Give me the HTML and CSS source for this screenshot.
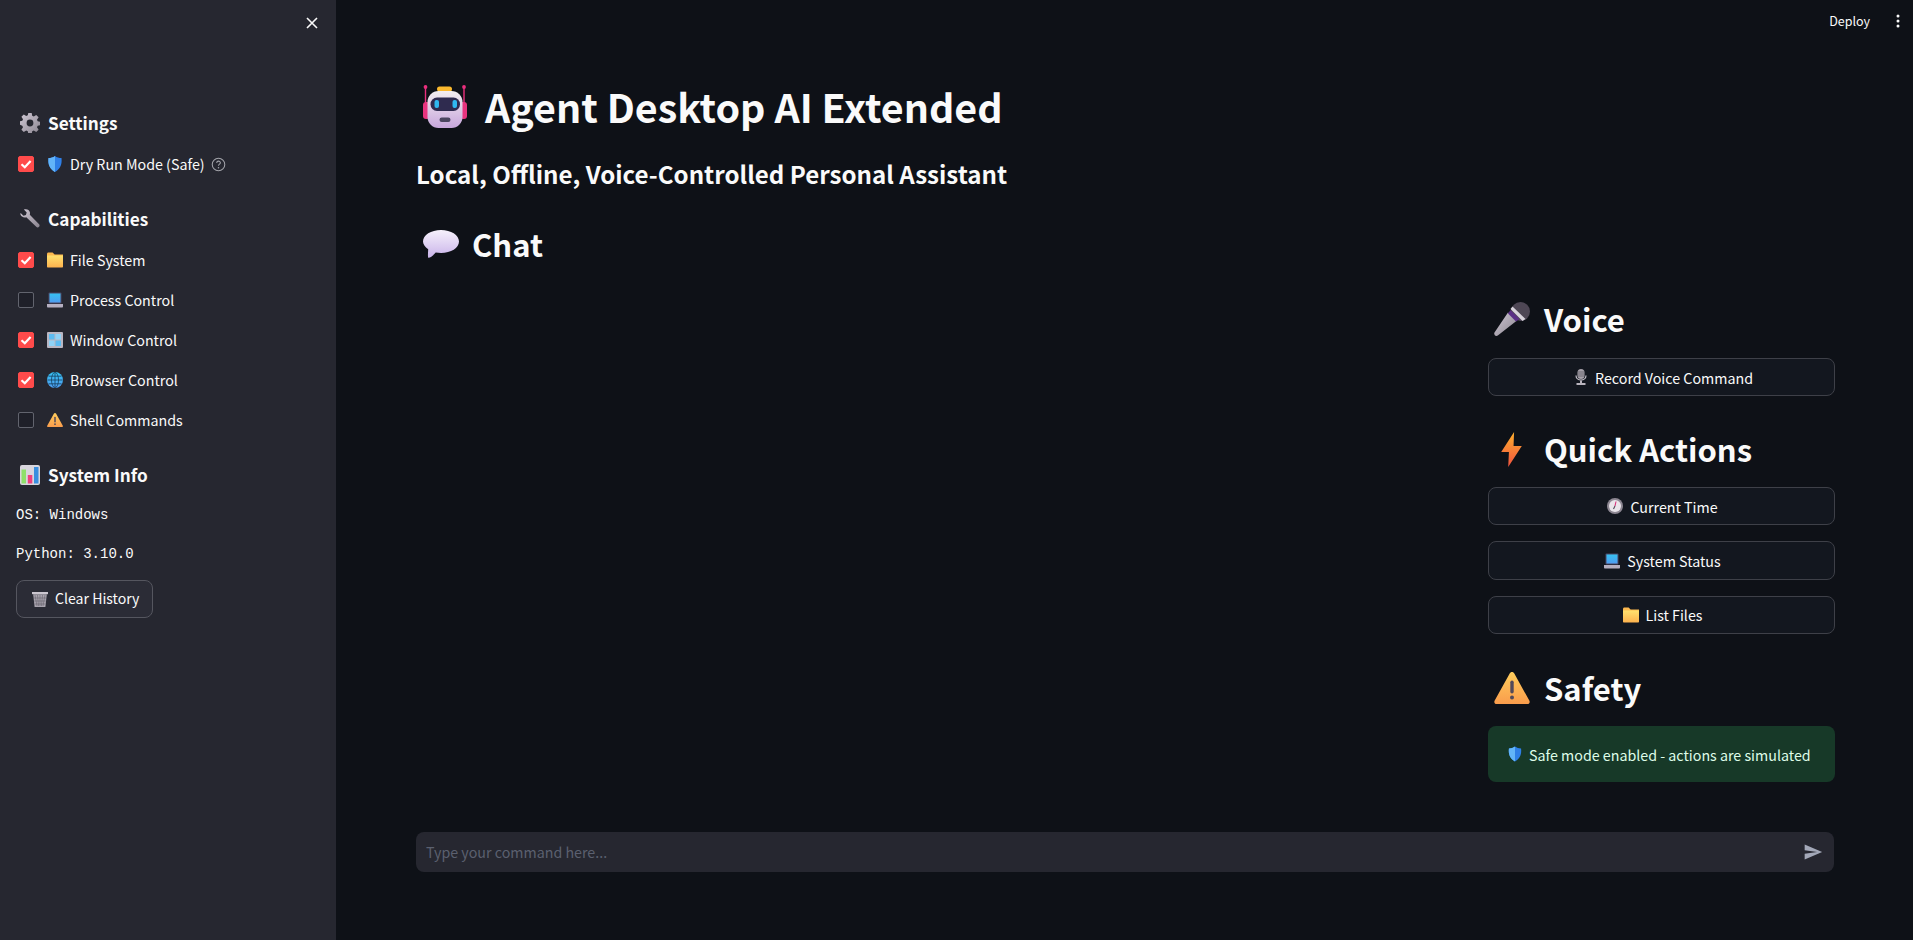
FILE: index.html
```html
<!DOCTYPE html>
<html lang="en">
<head>
<meta charset="utf-8">
<title>Agent Desktop AI Extended</title>
<link rel="stylesheet" href="styles.css">
</head>
<body>
<svg class="defs" aria-hidden="true">
  <defs>
    <linearGradient id="gBlue" x1="0" y1="0" x2="0" y2="1"><stop offset="0" stop-color="#35c1f1"/><stop offset="1" stop-color="#4f9cf0"/></linearGradient>
    <linearGradient id="gFolder" x1="0" y1="0" x2="0" y2="1"><stop offset="0" stop-color="#ffe16e"/><stop offset="1" stop-color="#fdb24e"/></linearGradient>
    <linearGradient id="gWarn" x1="0" y1="0" x2="0" y2="1"><stop offset="0" stop-color="#ffcd5c"/><stop offset="1" stop-color="#f99c4c"/></linearGradient>
    <linearGradient id="gBolt" x1="0" y1="0" x2="0" y2="1"><stop offset="0" stop-color="#ffb02e"/><stop offset="1" stop-color="#f0523f"/></linearGradient>
    <linearGradient id="gHead" x1="0" y1="0" x2="0" y2="1"><stop offset="0" stop-color="#f3eef0"/><stop offset="1" stop-color="#c7a6dc"/></linearGradient>
    <linearGradient id="gBubble" x1="0" y1="0" x2="0" y2="1"><stop offset="0" stop-color="#f6f1fb"/><stop offset="1" stop-color="#c9b3ea"/></linearGradient>
    <linearGradient id="gMetal" x1="0" y1="0" x2="1" y2="1"><stop offset="0" stop-color="#cfc8d4"/><stop offset="1" stop-color="#8b8590"/></linearGradient>

    <symbol id="i-gear" viewBox="0 0 20 20">
      <path fill="url(#gMetal)" fill-rule="evenodd" d="M8.3 0h3.4l.5 2.8 1.6.7 2.4-1.6 2.4 2.4-1.6 2.4.7 1.6 2.8.5v3.4l-2.8.5-.7 1.6 1.6 2.4-2.4 2.4-2.4-1.6-1.6.7-.5 2.8H8.3l-.5-2.8-1.6-.7-2.4 1.6-2.4-2.4 1.6-2.4-.7-1.6L0 11.7V8.3l2.3-.5.7-1.6-1.6-2.4 2.4-2.4 2.4 1.6 1.6-.7zM10 6.6a3.4 3.4 0 1 0 0 6.8 3.4 3.4 0 0 0 0-6.8z"/>
    </symbol>
    <symbol id="i-shield" viewBox="0 0 15 16">
      <path fill="#2f7fe6" d="M7.500 0C9.300 1.400 11.600 2 14 2.100c.7 5.800-.9 11-6.500 13.900C1.900 13.100.3 7.900 1 2.100 3.400 2 5.700 1.400 7.500 0z"/>
      <path fill="#62b4f8" d="M7.500 0v16C1.900 13.100.3 7.900 1 2.100 3.400 2 5.700 1.400 7.500 0z"/>
    </symbol>
    <symbol id="i-wrench" viewBox="0 0 20 20">
      <path fill="url(#gMetal)" d="M.6 3.900 3.500 6.700 5.900 5.900 6.700 3.500 3.900.6C6.600-.5 9.300.7 9.900 3.300c.2.900.1 1.700-.1 2.400l9.300 9.600c1.300 1.400-.3 3.800-2.100 2.900-.4-.2-.7-.5-1-.8L6.300 8.300c-1.400.4-3.100.2-4.300-.8C.6 6.500.1 5.300.6 3.900z"/>
    </symbol>
    <symbol id="i-folder" viewBox="0 0 16 15">
      <path fill="#fdb94f" d="M0 1.500C0 .7.600 0 1.400 0h4.200l2 2H16v3H0z"/>
      <path fill="url(#gFolder)" d="M0 3h16v11c0 .600-.400 1-1 1H1c-.600 0-1-.400-1-1z"/>
    </symbol>
    <symbol id="i-laptop" viewBox="0 0 16 15">
      <rect x="1.500" y="0" width="13" height="11" rx="1" fill="#4a4766"/>
      <rect x="2.500" y="1" width="11" height="9" fill="url(#gBlue)"/>
      <path fill="#b5afc0" d="M0 11.500h16V14c0 .500-.400 1-1 1H1c-.600 0-1-.500-1-1z"/>
    </symbol>
    <symbol id="i-window" viewBox="0 0 16 16">
      <rect width="16" height="16" rx="1" fill="#b9b6c2"/>
      <rect x="2" y="2" width="5.500" height="5.500" fill="#5cbcf2"/>
      <rect x="8.500" y="2" width="5.500" height="5.500" fill="#8fd3f7"/>
      <rect x="2" y="8.500" width="5.500" height="5.500" fill="#8fd3f7"/>
      <rect x="8.500" y="8.500" width="5.500" height="5.500" fill="#5cbcf2"/>
    </symbol>
    <symbol id="i-globe" viewBox="0 0 16 16">
      <circle cx="8" cy="8" r="8" fill="url(#gBlue)"/>
      <g fill="none" stroke="#16405f" stroke-width=".8">
        <ellipse cx="8" cy="8" rx="3.500" ry="7.600"/>
        <path d="M8 .4v15.200M.4 8h15.200M1.500 4.200h13M1.500 11.800h13"/>
      </g>
    </symbol>
    <symbol id="i-warn" viewBox="0 0 36 32">
      <path fill="url(#gWarn)" d="M15.700 1.600c1-2 3.600-2 4.600 0l15 27c1 1.700 0 3.400-2 3.400H2.700c-2 0-3-1.700-2-3.400z"/>
      <rect x="16.300" y="8.500" width="3.400" height="13" rx="1.700" fill="#524a5a"/>
      <circle cx="18" cy="25.500" r="2" fill="#524a5a"/>
    </symbol>
    <symbol id="i-chart" viewBox="0 0 20 20">
      <rect width="20" height="20" rx="2" fill="#d9d6de"/>
      <rect x="1.500" y="4.500" width="4.500" height="14" fill="#8fe06a"/>
      <rect x="7.800" y="10" width="4.500" height="8.500" fill="#f0407f"/>
      <rect x="14" y="2" width="4.500" height="16.500" fill="#3a8fe0"/>
    </symbol>
    <symbol id="i-trash" viewBox="0 0 16 16">
      <path fill="#cbc6cf" d="M0 1h16v2.200H0z"/>
      <path fill="#a9a4ae" d="M1.200 3.200h13.600L13.400 16H2.600z"/>
      <path fill="none" stroke="#66616d" stroke-width=".6" d="M3 4l2 11M5.500 4l1 11M8 4v11M10.500 4l-1 11M13 4l-2 11M2 7h12M2.300 10h11.400M2.600 13h10.800"/>
    </symbol>
    <symbol id="i-robot" viewBox="0 0 44 43">
      <rect x="14" y="1.500" width="15" height="5" rx="2.500" fill="#fbb92e"/>
      <path stroke="#ea2f7e" stroke-width="1.400" d="M2.500 2v20M41 2v20"/>
      <circle cx="2.500" cy="2" r="1.900" fill="#ea2f7e"/>
      <circle cx="41" cy="2" r="1.900" fill="#ea2f7e"/>
      <rect x="0" y="17" width="7" height="17" rx="3" fill="#e8347f"/>
      <rect x="37" y="17" width="7" height="17" rx="3" fill="#e8347f"/>
      <rect x="4.500" y="6" width="35" height="37" rx="11" fill="url(#gHead)"/>
      <rect x="7.500" y="12.500" width="29.500" height="13.500" rx="6.500" fill="#2f2b4f"/>
      <rect x="11.500" y="15" width="4.500" height="8" rx="2" fill="#2fb8f0"/>
      <rect x="29.500" y="15" width="4.500" height="8" rx="2" fill="#2fb8f0"/>
      <rect x="16.500" y="32.500" width="11" height="4.500" rx="2.200" fill="#4b4560"/>
    </symbol>
    <symbol id="i-bubble" viewBox="0 0 36 28">
      <path fill="url(#gBubble)" d="M18 0C28 0 36 5 36 11.500S28 23 18 23c-2 0-3.700-.2-5.300-.5C10.700 25 7.500 27.800 5.600 27.800c-1 0-.6-3.500-.4-8.600C2 17 0 14.400 0 11.500 0 5 8 0 18 0z"/>
    </symbol>
    <symbol id="i-mic" viewBox="0 0 36 34">
      <path fill="url(#gMetal)" d="M.5 30.500 14 10.500l9 8L3.800 33.500c-1 .8-2.300.6-3-.3-.6-.8-.8-1.900-.3-2.700z"/>
      <circle cx="26.500" cy="9.500" r="9.500" fill="#4e4755"/>
      <path fill="#5a2f86" d="m14 11.500 2.500-3.500 9 9-3.500 2.500z"/>
      <path fill="#d8d3dc" d="m16.500 7 2-2.500 13 12.500-3 2z"/>
    </symbol>
    <symbol id="i-bolt" viewBox="0 0 20 34">
      <path fill="url(#gBolt)" d="M12.500 0 0 19.500h7.500L6.800 34 20 13.500h-8z"/>
    </symbol>
    <symbol id="i-studio" viewBox="0 0 12 16">
      <rect x="2.500" y="0" width="7" height="10" rx="3.500" fill="#a6a1aa"/>
      <path fill="none" stroke="#c8c3cc" stroke-width="1.200" d="M1 6.500c0 6 10 6 10 0"/>
      <path fill="#b9b4bd" d="M5 11.500h2v2.500h3.500v2h-9v-2H5z"/>
      <path stroke="#55505c" stroke-width=".7" d="M3 3h6M3 5h6M3 7h6"/>
    </symbol>
    <symbol id="i-clock" viewBox="0 0 16 16">
      <circle cx="8" cy="8" r="8" fill="#8d8792"/>
      <circle cx="8" cy="8" r="6" fill="#e9e5ea"/>
      <path fill="none" stroke="#d8327a" stroke-width="1.100" d="M8 8 9 3.500"/>
      <path fill="none" stroke="#514b58" stroke-width="1.100" d="M8 8 6.500 11"/>
    </symbol>
  </defs>
</svg>

<div class="app">
  <aside class="sidebar">
    <div class="side-top">
      <svg class="close" viewBox="0 0 14 14"><path d="M2 2l10 10M12 2 2 12"/></svg>
    </div>

    <section class="side-group group-settings">
      <h2 class="side-h"><svg class="side-h-ico"><use href="#i-gear"/></svg>Settings</h2>
      <label class="check on">
        <span class="box"><svg viewBox="0 0 16 16"><path d="M3.500 8.200 6.800 11.300 12.600 4.900"/></svg></span>
        <svg class="emo"><use href="#i-shield"/></svg>
        <span>Dry Run Mode (Safe)</span>
        <svg class="help" viewBox="0 0 16 16"><circle cx="8" cy="8" r="6.700"/><path d="M6.100 6.300c0-2.500 3.900-2.500 3.900-.1 0 1.500-2 1.500-2 3.200"/><circle class="dot" cx="8" cy="11.500" r=".8"/></svg>
      </label>
    </section>

    <section class="side-group group-caps">
      <h2 class="side-h"><svg class="side-h-ico"><use href="#i-wrench"/></svg>Capabilities</h2>
      <div class="check-list">
        <label class="check on"><span class="box"><svg viewBox="0 0 16 16"><path d="M3.500 8.200 6.800 11.300 12.600 4.900"/></svg></span><svg class="emo"><use href="#i-folder"/></svg><span>File System</span></label>
        <label class="check"><span class="box"></span><svg class="emo"><use href="#i-laptop"/></svg><span>Process Control</span></label>
        <label class="check on"><span class="box"><svg viewBox="0 0 16 16"><path d="M3.500 8.200 6.800 11.300 12.600 4.900"/></svg></span><svg class="emo"><use href="#i-window"/></svg><span>Window Control</span></label>
        <label class="check on"><span class="box"><svg viewBox="0 0 16 16"><path d="M3.500 8.200 6.800 11.300 12.600 4.900"/></svg></span><svg class="emo"><use href="#i-globe"/></svg><span>Browser Control</span></label>
        <label class="check"><span class="box"></span><svg class="emo"><use href="#i-warn"/></svg><span>Shell Commands</span></label>
      </div>
    </section>

    <section class="side-group group-info">
      <h2 class="side-h"><svg class="side-h-ico"><use href="#i-chart"/></svg>System Info</h2>
      <div class="code-list">
        <code>OS: Windows</code>
        <code>Python: 3.10.0</code>
      </div>
      <button class="side-btn" type="button"><svg class="emo"><use href="#i-trash"/></svg>Clear History</button>
    </section>
  </aside>

  <main class="main">
    <header class="topbar">
      <span class="deploy">Deploy</span>
      <svg class="kebab" viewBox="0 0 4 14"><circle cx="2" cy="2" r="1.500"/><circle cx="2" cy="7" r="1.500"/><circle cx="2" cy="12" r="1.500"/></svg>
    </header>

    <div class="content">
      <h1 class="title"><svg class="title-ico"><use href="#i-robot"/></svg>Agent Desktop AI Extended</h1>
      <h3 class="subtitle">Local, Offline, Voice-Controlled Personal Assistant</h3>
      <h2 class="chat-h"><svg class="chat-ico"><use href="#i-bubble"/></svg>Chat</h2>

      <div class="columns">
        <div class="chat-area"></div>
        <div class="panel">
          <h2 class="panel-h h-voice"><svg class="ico-mic"><use href="#i-mic"/></svg>Voice</h2>
          <button class="btn btn-record" type="button"><svg class="emo-s"><use href="#i-studio"/></svg>Record Voice Command</button>

          <h2 class="panel-h h-quick"><svg class="ico-bolt"><use href="#i-bolt"/></svg>Quick Actions</h2>
          <div class="btn-list">
            <button class="btn" type="button"><svg class="emo-b"><use href="#i-clock"/></svg>Current Time</button>
            <button class="btn" type="button"><svg class="emo-b"><use href="#i-laptop"/></svg>System Status</button>
            <button class="btn" type="button"><svg class="emo-b"><use href="#i-folder"/></svg>List Files</button>
          </div>

          <h2 class="panel-h h-safety"><svg class="ico-warn"><use href="#i-warn"/></svg>Safety</h2>
          <div class="alert"><svg class="alert-ico"><use href="#i-shield"/></svg>Safe mode enabled - actions are simulated</div>
        </div>
      </div>

      <div class="chat-input">
        <span class="placeholder">Type your command here...</span>
        <svg class="send" viewBox="0 0 24 24"><path d="M2.010 21 23 12 2.010 3 2 10l15 2-15 2z"/></svg>
      </div>
    </div>
  </main>
</div>
</body>
</html>
```

FILE: styles.css
```css
* { box-sizing: border-box; }

html, body {
  margin: 0;
  height: 940px;
  overflow: hidden;
}

body {
  background: #0e1117;
  color: #fafafa;
  font-family: "Noto Sans CJK SC", "Noto Sans", sans-serif;
}

h1, h2, h3 { margin: 0; }

.defs { position: absolute; width: 0; height: 0; }

.app { display: flex; height: 940px; }

/* Sidebar */
.sidebar {
  width: 336px;
  flex: none;
  background: #262730;
  padding: 0 16px;
}

.side-top {
  height: 46px;
  display: flex;
  justify-content: flex-end;
  align-items: center;
  padding-right: 1px;
}

.close { width: 14px; height: 14px; fill: none; stroke: #fafafa; stroke-width: 1.600; }

.side-h {
  display: flex;
  align-items: center;
  height: 32px;
  font-size: 17.2px;
  font-weight: 600;
  line-height: 32px;
  padding-left: 4px;
}

.side-h-ico { width: 20px; height: 20px; margin-right: 8px; flex: none; }

.group-settings { margin-top: 61px; }
.group-caps { margin-top: 27px; }
.group-info { margin-top: 27px; }

.check {
  display: flex;
  align-items: center;
  height: 24px;
  font-size: 14.25px;
  line-height: 24px;
  padding-left: 2px;
}

.group-settings .check { margin-top: 13px; }

.check-list { display: flex; flex-direction: column; gap: 16px; margin-top: 13px; }

.box {
  width: 16px;
  height: 16px;
  flex: none;
  border-radius: 2px;
  border: 1px solid #62646e;
  background: #1f2029;
  margin-right: 13px;
}

.check.on .box { background: #ff4b4b; border-color: #ff4b4b; }

.box svg { display: block; width: 16px; height: 16px; margin: -1px; fill: none; stroke: #fff; stroke-width: 2.200; }

.emo { width: 16px; height: 16px; flex: none; margin-right: 7px; }

.help { width: 15px; height: 15px; margin-left: 6px; fill: none; stroke: #a3a4aa; stroke-width: 1.100; }
.help .dot { fill: #a3a4aa; stroke: none; }

.code-list { display: flex; flex-direction: column; gap: 15px; margin-top: 12px; }

code {
  display: block;
  height: 24px;
  font-family: "Liberation Mono", monospace;
  font-size: 14px;
  line-height: 24px;
  color: #fafafa;
}

.side-btn {
  display: flex;
  align-items: center;
  height: 38px;
  margin-top: 14px;
  padding: 0 13px 2px 15px;
  background: #2b2c36;
  border: 1px solid #55565f;
  border-radius: 8px;
  color: #fafafa;
  font: inherit;
  font-size: 14.1px;
}

.side-btn .emo { margin-top: 2px; }

/* Main */
.main { flex: 1; min-width: 0; display: flex; flex-direction: column; }

.topbar {
  height: 42px;
  flex: none;
  display: flex;
  justify-content: flex-end;
  align-items: center;
  padding-right: 13px;
  font-size: 12.5px;
}

.deploy { padding-bottom: 1px; }

.kebab { width: 4px; height: 14px; margin-left: 26px; fill: #fafafa; }

.content {
  flex: 1;
  min-height: 0;
  display: flex;
  flex-direction: column;
  padding: 0 78px 68px 80px;
}

.title {
  display: flex;
  align-items: center;
  height: 56px;
  margin-top: 36px;
  font-size: 39.4px;
  font-weight: 700;
  line-height: 56px;
  padding-left: 7px;
}

.title-ico { width: 44px; height: 43px; margin-right: 18px; flex: none; }

.subtitle {
  height: 36px;
  margin-top: 22px;
  font-size: 24.1px;
  font-weight: 600;
  line-height: 36px;
}

.chat-h {
  display: flex;
  align-items: center;
  height: 44px;
  margin-top: 30px;
  font-size: 31px;
  font-weight: 600;
  line-height: 44px;
  padding-left: 7px;
}

.chat-ico { width: 36px; height: 28px; margin-right: 13px; flex: none; }

.columns { flex: 1; min-height: 0; display: flex; justify-content: space-between; }
.chat-area { flex: 1; }

.panel { width: 347px; flex: none; }

.panel-h {
  display: flex;
  align-items: center;
  height: 44px;
  font-size: 31px;
  font-weight: 600;
  line-height: 44px;
}

.h-voice { margin-top: 31px; padding-left: 6px; }
.h-quick { margin-top: 31px; padding-left: 13px; }
.h-safety { margin-top: 32px; padding-left: 6px; }

.ico-mic { width: 36px; height: 34px; margin-right: 14px; flex: none; }
.ico-bolt { width: 21px; height: 35px; margin-right: 22px; flex: none; }
.ico-warn { width: 36px; height: 32px; margin-right: 14px; flex: none; }

.btn {
  display: flex;
  justify-content: center;
  align-items: center;
  width: 100%;
  height: 38px;
  margin-top: 17px;
  padding: 0 0 0 2px;
  background: #13171f;
  border: 1px solid #3e4048;
  border-radius: 8px;
  color: #fafafa;
  font: inherit;
  font-size: 14.25px;
}

.btn-record { padding-left: 5px; }

.btn-list { display: flex; flex-direction: column; gap: 16px; margin-top: 16px; }
.btn-list .btn { margin-top: 0; height: 38.4px; }

.emo-s { width: 12px; height: 16px; margin-right: 8px; flex: none; }
.emo-b { width: 16px; height: 16px; margin-right: 7px; flex: none; }

.alert {
  display: flex;
  align-items: center;
  height: 56px;
  margin-top: 16px;
  padding: 0 20px;
  background: #173928;
  border-radius: 8px;
  color: #dffde9;
  font-size: 14.25px;
}

.alert-ico { width: 14px; height: 16px; margin-right: 7px; flex: none; }

.chat-input {
  display: flex;
  align-items: center;
  justify-content: space-between;
  height: 40px;
  flex: none;
  margin-right: 1px;
  background: #262730;
  border-radius: 8px;
  padding: 0 11px 0 10px;
}

.placeholder { font-size: 14.25px; color: #5b606f; padding-bottom: 2px; }

.send { width: 20px; height: 20px; fill: #a3a8b8; }
```
